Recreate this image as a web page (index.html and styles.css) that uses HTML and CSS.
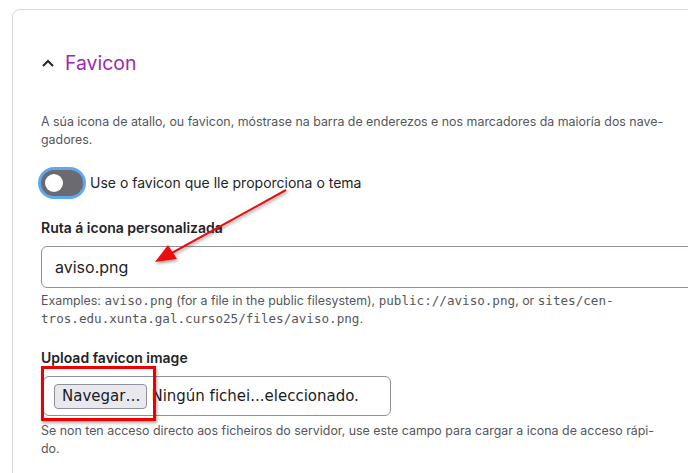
FILE: index.html
```html
<!DOCTYPE html>
<html lang="gl">
<head>
<meta charset="utf-8">
<link rel="stylesheet" href="styles.css">
</head>
<body>
<div class="page">
  <section class="card">
    <div class="summary">
      <svg class="chevron" width="12" height="8" viewBox="0 0 12 8"><path d="M1 7 L6 2 L11 7" fill="none" stroke="#232429" stroke-width="2"/></svg>
      <span class="title">Favicon</span>
    </div>
    <p class="desc first">A súa icona de atallo, ou favicon, móstrase na barra de enderezos e nos marcadores da maioría dos nave-<br>gadores.</p>
    <div class="toggle-row">
      <span class="toggle"><span class="knob"></span></span>
      <span class="toggle-label">Use o favicon que lle proporciona o tema</span>
    </div>
    <div class="field-label ruta">Ruta á icona personalizada</div>
    <div class="text-input">aviso.png</div>
    <p class="desc examples">Examples: <code>aviso.png</code> (for a file in the public filesystem), <code>public://aviso.png</code>, or <code>sites/cen-</code><br><code>tros.edu.xunta.gal.curso25/files/aviso.png</code>.</p>
    <div class="field-label upload">Upload favicon image</div>
    <div class="file-input">
      <span class="file-btn">Navegar…</span>
      <span class="file-name">Ningún fichei...eleccionado.</span>
    </div>
    <p class="desc help">Se non ten acceso directo aos ficheiros do servidor, use este campo para cargar a icona de acceso rápi-<br>do.</p>
  </section>
  <div class="highlight"></div>
  <svg class="arrow" width="688" height="473" viewBox="0 0 688 473">
    <defs>
      <filter id="sh" x="-20%" y="-20%" width="140%" height="140%">
        <feDropShadow dx="1" dy="2" stdDeviation="1.5" flood-color="#000" flood-opacity="0.35"/>
      </filter>
    </defs>
    <g filter="url(#sh)">
      <line x1="286" y1="190" x2="170" y2="254" stroke="#ee1111" stroke-width="2"/>
      <polygon points="155,262 168,245 177,259" fill="#ee1111"/>
    </g>
  </svg>
</div>
</body>
</html>
```

FILE: styles.css
```css
html, body {
  margin: 0;
  padding: 0;
  background: #ffffff;
  overflow: hidden;
}
body {
  width: 688px;
  height: 473px;
  font-family: Inter, "Noto Sans", sans-serif;
  color: #232429;
}
.page {
  position: relative;
  width: 688px;
  height: 473px;
  padding: 9px 0 0 12px;
  box-sizing: border-box;
  overflow: hidden;
}
.card {
  width: 740px;
  height: 520px;
  border: 1px solid #d8d9de;
  border-radius: 8px;
  box-sizing: border-box;
  padding: 0 0 0 28px;
}
.summary {
  display: flex;
  align-items: center;
  height: 24px;
  padding-top: 41px;
}
.chevron {
  margin-left: 1px;
  margin-right: 11px;
}
.title {
  font-size: 19.4px;
  line-height: 24px;
  color: #9c29b0;
}
.desc {
  margin: 0;
  font-size: 12.4px;
  line-height: 18px;
  color: #55565b;
}
.desc.first {
  margin-top: 38px;
}
.desc code {
  font-family: "DejaVu Sans Mono", monospace;
  font-size: 12.6px;
}
.toggle-row {
  display: flex;
  align-items: center;
  margin-top: 21px;
  height: 26px;
}
.toggle {
  width: 42px;
  height: 26px;
  box-sizing: border-box;
  border-radius: 13px;
  background: #6a6a70;
  box-shadow: 0 0 0 3px #5ea8f2;
  display: flex;
  align-items: center;
  padding-left: 4px;
}
.knob {
  width: 18px;
  height: 18px;
  border-radius: 50%;
  background: #ffffff;
}
.toggle-label {
  margin-left: 7px;
  font-size: 14px;
  line-height: 20px;
  color: #232429;
}
.field-label {
  font-size: 14px;
  line-height: 20px;
  font-weight: 600;
  color: #232429;
}
.ruta { margin-top: 22px; }
.upload { margin-top: 20px; }
.text-input {
  margin-top: 8px;
  height: 42px;
  width: 700px;
  box-sizing: border-box;
  border: 1px solid #8e929c;
  border-radius: 6px;
  padding-left: 13px;
  display: flex;
  align-items: center;
  font-size: 16px;
}
.desc.examples { margin-top: 4px; }
.file-input {
  margin-top: 8px;
  margin-left: 2px;
  width: 348px;
  height: 40px;
  box-sizing: border-box;
  border: 1px solid #8e929c;
  border-radius: 6px;
  display: flex;
  align-items: center;
  padding-left: 10px;
  font-family: "DejaVu Sans", sans-serif;
  font-size: 15px;
}
.file-btn {
  height: 25px;
  box-sizing: border-box;
  padding: 0 6px 0 7px;
  border: 1px solid #8f8f9d;
  border-radius: 4px;
  background: #e9e9ed;
  display: flex;
  align-items: center;
  color: #1b1b1f;
}
.file-name {
  margin-left: 4px;
  color: #1b1b1f;
}
.desc.help { margin-top: 6px; }
.highlight {
  position: absolute;
  left: 41px;
  top: 366px;
  width: 115px;
  height: 55px;
  box-sizing: border-box;
  border: 3px solid #ee0000;
  box-shadow: 1px 2px 3px rgba(0,0,0,0.35);
}
.arrow {
  position: absolute;
  left: 0;
  top: 0;
  pointer-events: none;
}
```
